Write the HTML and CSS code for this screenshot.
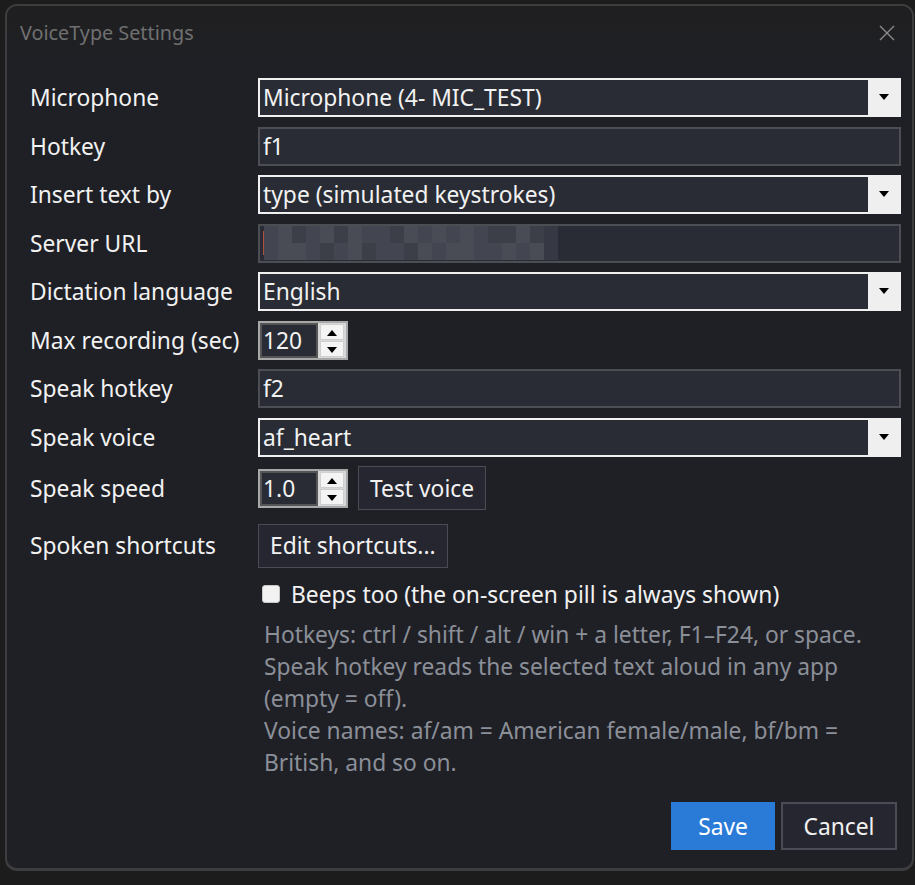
FILE: index.html
```html
<!DOCTYPE html>
<html lang="en">
<head>
  <meta charset="UTF-8" />
  <title>VoiceType Settings</title>
  <link rel="stylesheet" href="styles.css">
</head>
<body>
  <div class="window">
    <div class="titlebar">
      <span class="title">VoiceType Settings</span>
      <svg class="close" width="16" height="16" viewBox="0 0 16 16">
        <path d="M1 1 L15 15 M15 1 L1 15" stroke="#8a8a8a" stroke-width="1.4" fill="none" />
      </svg>
    </div>

    <div class="form">
      <label>Microphone</label>
      <div class="combo"><span class="value">Microphone (4- MIC_TEST)</span><span class="drop"></span></div>

      <label>Hotkey</label>
      <div class="entry">f1</div>

      <label>Insert text by</label>
      <div class="combo"><span class="value">type (simulated keystrokes)</span><span class="drop"></span></div>

      <label>Server URL</label>
      <div class="entry">
        <span class="caret"></span>
        <div class="blur">
          <span class="b2"></span><span class="b1"></span><span class="b3"></span><span class="b2"></span><span class="b1"></span><span class="b3"></span><span class="b1"></span><span class="b2"></span><span class="b2"></span><span class="b3"></span><span class="b1"></span><span class="b2"></span><span class="b1"></span><span class="b2"></span><span class="b1"></span><span class="b2"></span><span class="b3"></span><span class="b3"></span><span class="b1"></span><span class="b3"></span><span class="b4"></span>
          <span class="b2"></span><span class="b1"></span><span class="b1"></span><span class="b2"></span><span class="b3"></span><span class="b2"></span><span class="b1"></span><span class="b3"></span><span class="b2"></span><span class="b2"></span><span class="b3"></span><span class="b1"></span><span class="b2"></span><span class="b1"></span><span class="b1"></span><span class="b2"></span><span class="b2"></span><span class="b1"></span><span class="b2"></span><span class="b1"></span><span class="b4"></span>
        </div>
      </div>

      <label>Dictation language</label>
      <div class="combo"><span class="value">English</span><span class="drop"></span></div>

      <label>Max recording (sec)</label>
      <div class="line">
        <div class="spin"><span class="num">120</span><span class="arrows"><span class="up"></span><span class="down"></span></span></div>
      </div>

      <label>Speak hotkey</label>
      <div class="entry">f2</div>

      <label>Speak voice</label>
      <div class="combo"><span class="value">af_heart</span><span class="drop"></span></div>

      <label class="tall">Speak speed</label>
      <div class="line">
        <div class="spin"><span class="num">1.0</span><span class="arrows"><span class="up"></span><span class="down"></span></span></div>
        <button class="btn">Test voice</button>
      </div>

      <label class="tall shift">Spoken shortcuts</label>
      <div class="line shift">
        <button class="btn">Edit shortcuts...</button>
      </div>

      <span></span>
      <div class="check"><span class="box"></span>Beeps too (the on-screen pill is always shown)</div>

      <span></span>
      <p class="help">Hotkeys: ctrl / shift / alt / win + a letter, F1–F24, or space.<br>Speak hotkey reads the selected text aloud in any app (empty = off).<br>Voice names: af/am = American female/male, bf/bm = British, and so on.</p>
    </div>

    <div class="actions">
      <button class="btn primary">Save</button>
      <button class="btn cancel">Cancel</button>
    </div>
  </div>
</body>
</html>
```

FILE: styles.css
```css
body { margin: 0; background: #1c1c1c; font-family: "Noto Sans", "Open Sans", sans-serif; }
.window {
  margin: 4px 1px 0 5px;
  height: 862px;
  border: 2px solid #3d3d3f;
  border-bottom-width: 3px;
  border-radius: 12px;
  background: #1f2026;
  overflow: hidden;
  position: relative;
  color: #f2f2f2;
}
.titlebar {
  height: 52px;
  display: flex;
  align-items: center;
  justify-content: space-between;
  padding: 0 17px 0 13px;
  background: linear-gradient(#1f1f20, #1f2025);
}
.title { font-size: 19.8px; color: #707070; margin-top: 0; }
.close { margin-top: 2px; }

.form {
  display: grid;
  grid-template-columns: 228px 643px;
  row-gap: 9.5px;
  padding: 20px 0 0 23px;
  font-size: 22.8px;
}
.form label { height: 39px; display: flex; align-items: center; }
.form label.tall { height: 44px; }
.shift { margin-top: 4px; }

.entry, .combo {
  height: 39px;
  box-sizing: border-box;
  background: #292c34;
  border: 2px solid #4c4e53;
  display: flex;
  align-items: center;
  padding-left: 3px;
}
.combo { border-color: #f0f0f0; padding-right: 0; }
.combo .value { flex: 1; }
.drop {
  width: 29px;
  align-self: stretch;
  background: #efefef;
  border-left: 2px solid #f0f0f0;
  position: relative;
}
.drop::after {
  content: "";
  position: absolute;
  left: 9px;
  top: 14px;
  border-left: 5px solid transparent;
  border-right: 5px solid transparent;
  border-top: 6px solid #000;
}

.caret { width: 1px; height: 24px; background: #b0503c; margin-right: 0; }
.blur { display: grid; grid-template-columns: repeat(21, 14px); grid-auto-rows: 17px; }
.blur span { display: block; }
.blur .b1 { background: #4a4c55; }
.blur .b2 { background: #434650; }
.blur .b3 { background: #3c3f48; }
.blur .b4 { background: #363943; }

.line { display: flex; align-items: center; gap: 10px; }
.spin {
  width: 90px;
  height: 39px;
  box-sizing: border-box;
  border: 2px solid #a8a8a8;
  display: flex;
  background: #f0f0f0;
}
.num {
  width: 58px;
  box-sizing: border-box;
  border: 2px solid #555;
  background: #292c34;
  color: #f2f2f2;
  padding-left: 1px;
  display: flex;
  align-items: center;
}
.arrows { flex: 1; display: flex; flex-direction: column; padding: 1px 2px; gap: 1px; background: #d8d8d8; }
.arrows span { flex: 1; background: #f4f4f4; position: relative; border: 1px solid #cfcfcf; }
.arrows .up::after, .arrows .down::after {
  content: "";
  position: absolute;
  left: 6px;
  top: 5px;
  border-left: 5px solid transparent;
  border-right: 5px solid transparent;
}
.arrows .up::after { border-bottom: 6px solid #000; }
.arrows .down::after { border-top: 6px solid #000; }

.btn {
  font-family: inherit;
  font-size: 22.8px;
  color: #f2f2f2;
  background: #262630;
  border: 1px solid #4a4b55;
  height: 44px;
  padding: 0 11px;
}
.check { display: flex; align-items: center; height: 34px; margin-top: 0; }
.box {
  width: 16px;
  height: 16px;
  border-radius: 3px;
  background: #f2f2f2;
  border: 1px solid #c8c8c8;
  margin: 0 11px 0 4px;
}
.help {
  margin: -2px 0 0 6px;
  width: 620px;
  color: #8b8f98;
  font-size: 22.8px;
  line-height: 32px;
}
.actions {
  position: absolute;
  right: 15px;
  bottom: 18px;
  display: flex;
  gap: 6px;
}
.actions .btn { height: 48px; }
.primary { background: #2a7bd8; border-color: #2a7bd8; width: 104px; color: #fff; }
.cancel { border: 2px solid #4a4b55; width: 116px; }
```
